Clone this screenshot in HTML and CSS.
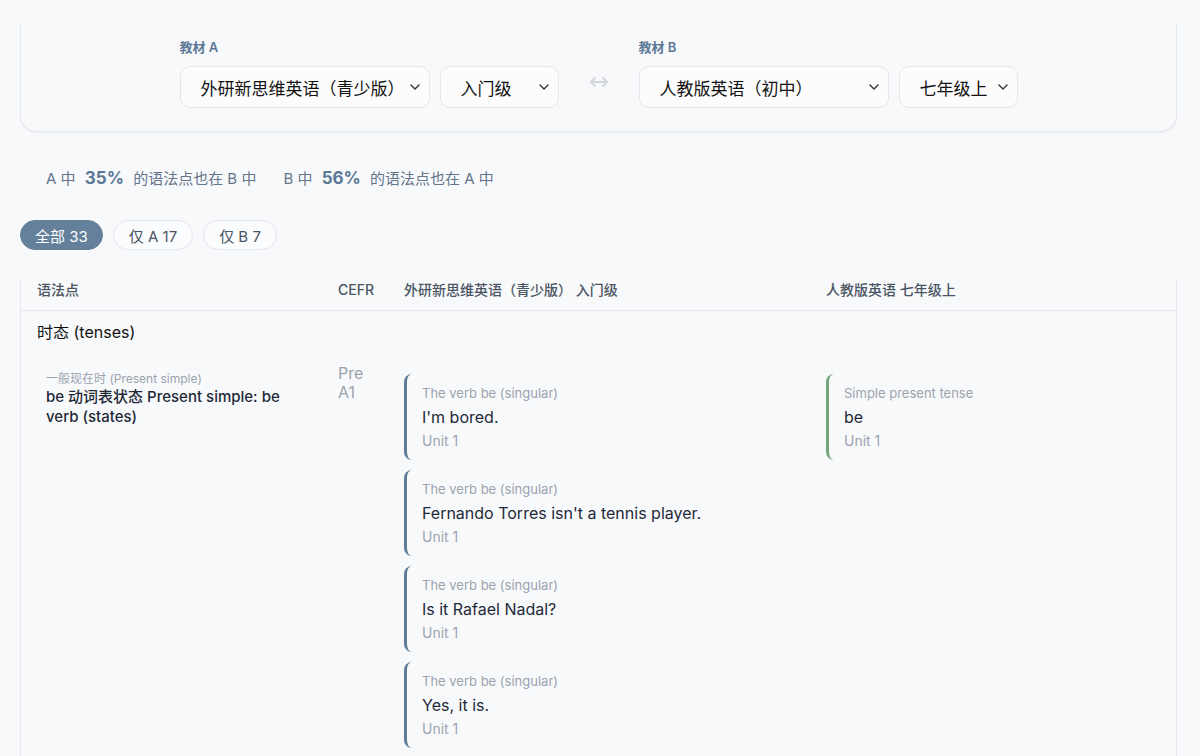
FILE: index.html
```html
<!DOCTYPE html>
<html lang="zh-CN">
<head>
  <meta charset="UTF-8" />
  <meta name="viewport" content="width=device-width, initial-scale=1" />
  <title>教材语法对比</title>
  <link rel="stylesheet" href="styles.css">
</head>
<body>
  <div class="page">

    <!-- textbook pickers -->
    <section class="picker-card">
      <div class="picker">
        <div class="picker-label">教材 A</div>
        <div class="picker-row">
          <div class="select wide">
            <span>外研新思维英语（青少版）</span>
            <svg class="chev" width="10" height="6" viewBox="0 0 10 6"><path d="M1 1 L5 5 L9 1" fill="none" stroke="#333" stroke-width="1.4" stroke-linecap="round" stroke-linejoin="round"/></svg>
          </div>
          <div class="select narrow">
            <span>入门级</span>
            <svg class="chev" width="10" height="6" viewBox="0 0 10 6"><path d="M1 1 L5 5 L9 1" fill="none" stroke="#333" stroke-width="1.4" stroke-linecap="round" stroke-linejoin="round"/></svg>
          </div>
        </div>
      </div>

      <svg class="swap" width="20" height="12" viewBox="0 0 20 12"><path d="M2 6 H18 M6 2 L2 6 L6 10 M14 2 L18 6 L14 10" fill="none" stroke="#d3d6db" stroke-width="2" stroke-linecap="round" stroke-linejoin="round"/></svg>

      <div class="picker">
        <div class="picker-label">教材 B</div>
        <div class="picker-row">
          <div class="select wide">
            <span>人教版英语（初中）</span>
            <svg class="chev" width="10" height="6" viewBox="0 0 10 6"><path d="M1 1 L5 5 L9 1" fill="none" stroke="#333" stroke-width="1.4" stroke-linecap="round" stroke-linejoin="round"/></svg>
          </div>
          <div class="select narrow">
            <span>七年级上</span>
            <svg class="chev" width="10" height="6" viewBox="0 0 10 6"><path d="M1 1 L5 5 L9 1" fill="none" stroke="#333" stroke-width="1.4" stroke-linecap="round" stroke-linejoin="round"/></svg>
          </div>
        </div>
      </div>
    </section>

    <!-- overlap stats -->
    <div class="stats">
      <div class="stat">A 中 <b>35%</b> 的语法点也在 B 中</div>
      <div class="stat">B 中 <b>56%</b> 的语法点也在 A 中</div>
    </div>

    <div class="tabs">
      <button class="tab active">全部 33</button>
      <button class="tab">仅 A 17</button>
      <button class="tab">仅 B 7</button>
    </div>

    <!-- comparison table -->
    <div class="table">
      <div class="row head">
        <div class="cell">语法点</div>
        <div class="cell">CEFR</div>
        <div class="cell">外研新思维英语（青少版） 入门级</div>
        <div class="cell">人教版英语 七年级上</div>
      </div>

      <div class="group">时态 (tenses)</div>

      <div class="row item">
        <div class="cell point">
          <div class="point-sub">一般现在时 (Present simple)</div>
          <div class="point-name">be 动词表状态 Present simple: be verb (states)</div>
        </div>
        <div class="cell cefr">Pre A1</div>
        <div class="cell refs">
          <div class="ref a">
            <div class="ref-topic">The verb be (singular)</div>
            <div class="ref-text">I'm bored.</div>
            <div class="ref-unit">Unit 1</div>
          </div>
          <div class="ref a">
            <div class="ref-topic">The verb be (singular)</div>
            <div class="ref-text">Fernando Torres isn't a tennis player.</div>
            <div class="ref-unit">Unit 1</div>
          </div>
          <div class="ref a">
            <div class="ref-topic">The verb be (singular)</div>
            <div class="ref-text">Is it Rafael Nadal?</div>
            <div class="ref-unit">Unit 1</div>
          </div>
          <div class="ref a">
            <div class="ref-topic">The verb be (singular)</div>
            <div class="ref-text">Yes, it is.</div>
            <div class="ref-unit">Unit 1</div>
          </div>
        </div>
        <div class="cell refs">
          <div class="ref b">
            <div class="ref-topic">Simple present tense</div>
            <div class="ref-text">be</div>
            <div class="ref-unit">Unit 1</div>
          </div>
        </div>
      </div>
    </div>

  </div>
</body>
</html>
```

FILE: styles.css
```css
body {
  margin: 0;
  background: #f8f9fb;
  font-family: Inter, "Noto Sans CJK SC", sans-serif;
  color: #1f2937;
}
.page {
  width: 1157px;
  margin-left: 20px;
  padding-top: 24px;
}

/* pickers */
.picker-card {
  display: flex;
  justify-content: center;
  align-items: center;
  gap: 30px;
  padding: 14px 0 23px;
  border: 1px solid #e4e7ec;
  border-top: none;
  border-radius: 0 0 16px 16px;
  box-shadow: 0 1px 2px rgba(0, 0, 0, 0.04);
}
.picker-label {
  font-size: 13px;
  line-height: 18px;
  font-weight: 600;
  color: #5d7896;
  margin-bottom: 10px;
}
.picker-row {
  display: flex;
  gap: 10px;
}
.select {
  box-sizing: border-box;
  height: 42px;
  display: flex;
  align-items: center;
  justify-content: space-between;
  padding: 0 9px 0 20px;
  border: 1px solid #e5e7eb;
  border-radius: 10px;
  background: #fcfcfd;
  font-size: 17px;
  color: #111;
}
.select.wide { width: 250px; }
.select.narrow { width: 119px; }
.swap {
  margin-top: 18px;
}

/* stats */
.stats {
  display: flex;
  gap: 27px;
  padding-left: 26px;
  margin-top: 34px;
  line-height: 24px;
  font-size: 15px;
  color: #64748b;
}
.stat b {
  font-size: 17px;
  color: #5a7795;
  margin: 0 5px;
}

/* filter tabs */
.tabs {
  display: flex;
  gap: 10px;
  margin-top: 29px;
}
.tab {
  height: 30px;
  padding: 0 15px;
  border: 1px solid #e3e6eb;
  border-radius: 15px;
  background: #fbfcfd;
  font-family: inherit;
  font-size: 15px;
  color: #4b5563;
}
.tab.active {
  padding: 0 14px;
  background: #64809b;
  border-color: #64809b;
  color: #fff;
}

/* table */
.table {
  margin-top: 30px;
  border: 1px solid #e6e8ec;
  border-top: none;
  border-bottom: none;
  min-height: 500px;
}
.row {
  display: grid;
  grid-template-columns: 301px 66px 422px 1fr;
}
.head {
  border-bottom: 1px solid #e6e8ec;
  font-size: 14px;
  font-weight: 500;
  color: #4b5563;
}
.head .cell {
  padding: 0 16px 10px;
  line-height: 20px;
}
.group {
  padding: 11px 16px 10px;
  line-height: 20px;
  font-size: 16px;
  color: #111;
}
.item .cell {
  padding-left: 16px;
  padding-right: 16px;
}
.point {
  padding-top: 19px;
}
.item .point {
  padding-left: 25px;
}
.point-sub {
  font-size: 12px;
  line-height: 16px;
  color: #9ca3af;
}
.point-name {
  font-size: 15px;
  line-height: 20px;
  font-weight: 500;
  color: #1f2937;
}
.cefr {
  padding-top: 12px;
  font-size: 16px;
  line-height: 19px;
  color: #9ca3af;
}
.refs {
  padding-top: 22px;
  display: flex;
  flex-direction: column;
  gap: 10px;
}
.ref {
  padding: 7px 0 7px 15px;
  border-left: 3px solid #5f7b98;
  border-radius: 8px;
  line-height: 24px;
}
.ref.b {
  border-left-color: #74a57c;
}
.ref-topic {
  font-size: 13px;
  color: #9ca3af;
}
.ref-text {
  font-size: 16px;
  color: #1f2937;
}
.ref-unit {
  font-size: 14px;
  color: #9ca3af;
}
```
